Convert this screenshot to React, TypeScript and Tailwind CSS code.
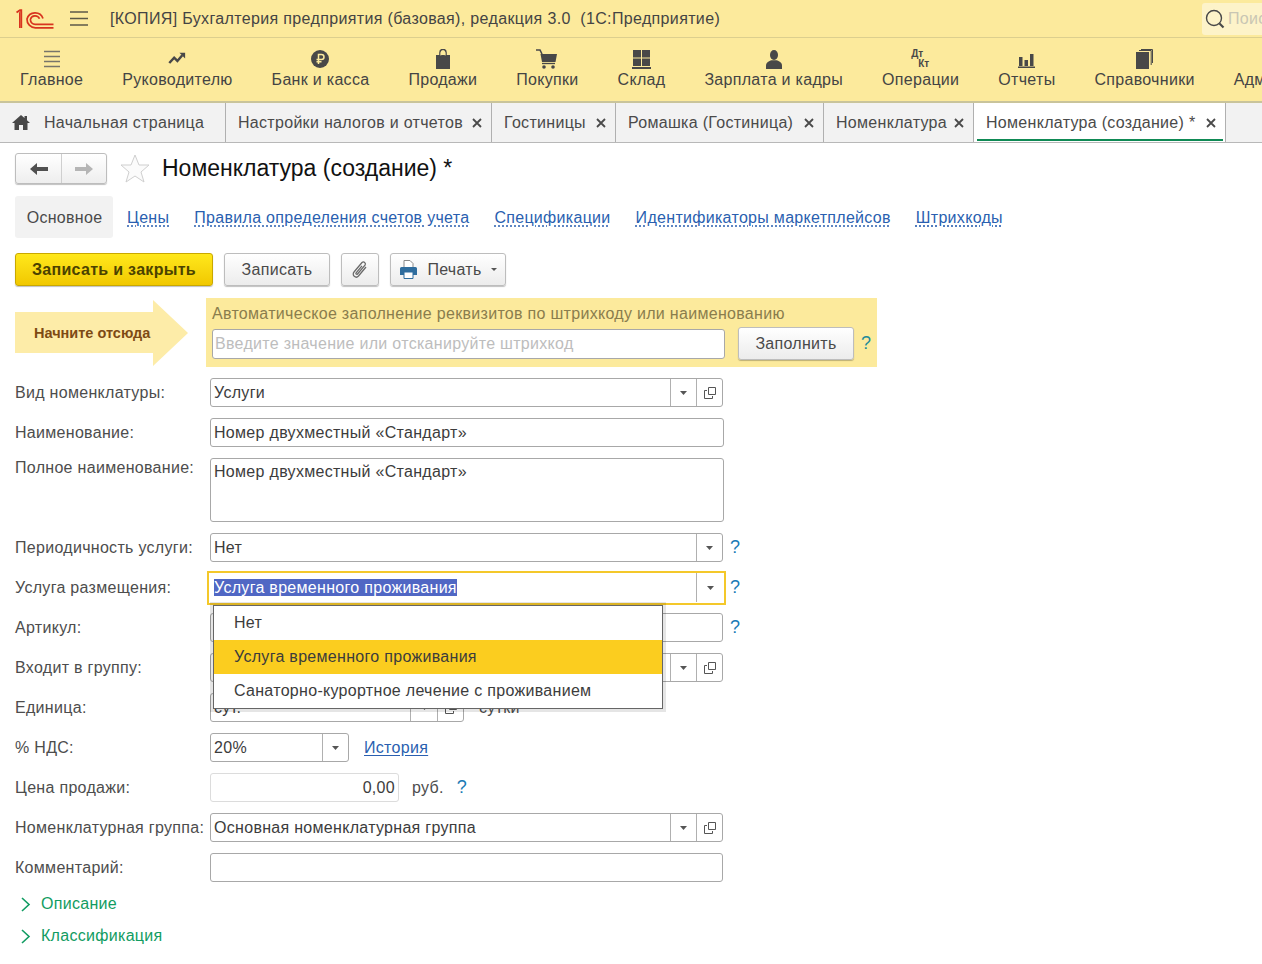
import React from 'react';

const navItems: { label: string; icon: React.ReactNode }[] = [
  { label: 'Главное', icon: <MenuIcon /> },
  { label: 'Руководителю', icon: <TrendIcon /> },
  { label: 'Банк и касса', icon: <RubleIcon /> },
  { label: 'Продажи', icon: <BagIcon /> },
  { label: 'Покупки', icon: <CartIcon /> },
  { label: 'Склад', icon: <StockIcon /> },
  { label: 'Зарплата и кадры', icon: <PersonIcon /> },
  { label: 'Операции', icon: <DebitIcon /> },
  { label: 'Отчеты', icon: <BarsIcon /> },
  { label: 'Справочники', icon: <BooksIcon /> },
  { label: 'Администрирование', icon: <span /> },
];

const tabs = [
  { label: 'Настройки налогов и отчетов', w: 'w-[266px]' },
  { label: 'Гостиницы', w: 'w-[124px]' },
  { label: 'Ромашка (Гостиница)', w: 'w-[208px]' },
  { label: 'Номенклатура', w: 'w-[150px]' },
];

const links = ['Цены', 'Правила определения счетов учета', 'Спецификации', 'Идентификаторы маркетплейсов', 'Штрихкоды'];

function MenuIcon() {
  return (
    <svg className="mb-[1px]" width="20" height="18" viewBox="0 0 20 18" fill="none" stroke="#77756a" strokeWidth="1.5">
      <path d="M2 1.5h16M2 6.5h16M2 11.5h16M2 16.5h16" />
    </svg>
  );
}

function TrendIcon() {
  return (
    <svg className="mb-[4px]" width="18" height="13" viewBox="0 0 22 16" fill="none">
      <path d="M1.5 13.5 7.5 7l4 4 6-7" stroke="#484848" strokeWidth="3" />
      <path d="M14 1h7v7z" fill="#484848" />
    </svg>
  );
}

function RubleIcon() {
  return (
    <svg className="mb-[1px]" width="18" height="18" viewBox="0 0 18 18" fill="none">
      <circle cx="9" cy="9" r="9" fill="#484848" />
      <path d="M7.5 14V4.5h3a2.4 2.4 0 0 1 0 5H5.5M5.5 11.8h5" stroke="#fcea9c" strokeWidth="1.5" />
    </svg>
  );
}

function BagIcon() {
  return (
    <svg width="16" height="20" viewBox="0 0 16 20" fill="none">
      <path d="M1 6h14v14H1z" fill="#484848" />
      <path d="M5 9V3.5a3 3 0 0 1 6 0V9" stroke="#484848" strokeWidth="1.6" />
      <path d="M5.8 6.5V4a2.2 2.2 0 0 1 4.4 0v2.5" stroke="#fcea9c" strokeWidth="0.8" />
    </svg>
  );
}

function CartIcon() {
  return (
    <svg width="22" height="20" viewBox="0 0 22 20" fill="none">
      <path d="M0 1h4l2 4" stroke="#484848" strokeWidth="1.6" />
      <path d="M4.5 5H21l-1.5 8H6z" fill="#484848" />
      <path d="M6 14.5h13" stroke="#484848" strokeWidth="1.3" />
      <circle cx="8" cy="18" r="1.8" fill="#484848" />
      <circle cx="17" cy="18" r="1.8" fill="#484848" />
    </svg>
  );
}

function StockIcon() {
  return (
    <svg width="19" height="19" viewBox="0 0 19 19" fill="#484848">
      <path d="M1 0h8v7.5H1zM10 0h8v7.5h-8zM1 8.5h8V16H1zM10 8.5h8V16h-8zM0 17h19v2H0z" />
    </svg>
  );
}

function PersonIcon() {
  return (
    <svg width="16" height="19" viewBox="0 0 16 19" fill="#484848">
      <ellipse cx="8" cy="5" rx="4" ry="5" />
      <path d="M0 19v-3.5C0 12.5 3 11 5.5 10.2h5c2.5.8 5.5 2.3 5.500 5.300V19z" />
    </svg>
  );
}

function DebitIcon() {
  return (
    <div className="flex h-[20px] w-[19px] flex-col text-[10px] font-bold leading-[10px] tracking-normal text-[#484848]">
      <span>Дт</span>
      <span className="ml-[7px]">Кт</span>
    </div>
  );
}

function BarsIcon() {
  return (
    <svg className="mb-[1px]" width="17" height="15" viewBox="0 0 17 15" fill="#484848">
      <path d="M1 4h3.5v9H1zM6.5 7H10v6H6.5zM12 1h3.5v12H12zM0 13.6h17V15H0z" />
    </svg>
  );
}

function BooksIcon() {
  return (
    <svg width="17" height="20" viewBox="0 0 17 20" fill="none">
      <path d="M0 3h13v17H0z" fill="#484848" />
      <path d="M3 1.5h12.2V16M5 .5h11.5V14" stroke="#484848" strokeWidth="1" />
    </svg>
  );
}

function Logo() {
  return (
    <svg width="38" height="20" viewBox="0 0 38 20" fill="none" stroke="#d8341f" strokeWidth="1.7">
      <path d="M0.5 3.5 4 1.2h1.2V19" strokeWidth="2" />
      <path d="M3.5 3.2V19" strokeWidth="1" />
      <path d="M27 9.5A8.4 8.4 0 0 0 11 10a8.4 8.4 0 0 0 8.4 8.8H37.5" />
      <path d="M23.5 9.8A4.8 4.8 0 0 0 14.4 10.4a4.8 4.8 0 0 0 5 5H37.5" />
    </svg>
  );
}

function HomeIcon() {
  return (
    <svg width="18" height="15" viewBox="0 0 18 15" fill="#484848">
      <path d="M9 0 0 8h2.5v7h4.5v-5h4v5h4.500V8H18l-3-2.700V1h-2.500v2.100z" />
    </svg>
  );
}

function CloseIcon() {
  return (
    <svg width="10" height="10" viewBox="0 0 10 10" fill="none" stroke="#4a4a4a" strokeWidth="1.8">
      <path d="m1 1 8 8M9 1 1 9" />
    </svg>
  );
}

function Caret() {
  return (
    <svg width="7" height="4" viewBox="0 0 7 4" fill="#555555">
      <path d="M0 0h7L3.500 4z" />
    </svg>
  );
}

function OpenIcon() {
  return (
    <svg width="12" height="12" viewBox="0 0 12 12" fill="none" stroke="#555555" strokeWidth="1">
      <path d="M4.500.5h7v7h-7z" />
      <path d="M3 3.500H.5v8h8V9" />
    </svg>
  );
}

function Chevron() {
  return (
    <svg width="11" height="15" viewBox="0 0 11 15" fill="none" stroke="#119c62" strokeWidth="1.6">
      <path d="m2 1 7 6.500-7 6.500" />
    </svg>
  );
}

function Help({ className = 'text-[#1a7ab5]' }: { className?: string }) {
  return <span className={`pb-[2px] text-[18px] leading-none ${className}`}>?</span>;
}

function Label({ text }: { text: string }) {
  return <span className="w-[195px] shrink-0 whitespace-nowrap text-[#4d4d4d]">{text}</span>;
}

function Cell({ w = 'w-[26px]', children }: { w?: string; children: React.ReactNode }) {
  return <span className={`flex h-full ${w} shrink-0 items-center justify-center border-l border-[#b0b0b0]`}>{children}</span>;
}

function Field({
  w = 'w-[513px]',
  text,
  caret,
  open,
}: {
  w?: string;
  text?: string;
  caret?: boolean;
  open?: boolean;
}) {
  return (
    <div className={`flex h-[29px] ${w} shrink-0 items-center rounded-[3px] border border-[#a8a8a8] bg-white`}>
      <span className="flex-1 truncate pl-[3px] text-[#3c3c3c]">{text}</span>
      {caret && (
        <Cell>
          <Caret />
        </Cell>
      )}
      {open && (
        <Cell>
          <OpenIcon />
        </Cell>
      )}
    </div>
  );
}

function Row({ label, children }: { label: string; children: React.ReactNode }) {
  return (
    <div className="flex h-[29px] items-center">
      <Label text={label} />
      {children}
    </div>
  );
}

function Button({ w, children }: { w: string; children: React.ReactNode }) {
  return (
    <button className={`flex h-[33px] ${w} items-center justify-center rounded-[3px] border border-[#bdbdbd] bg-gradient-to-b from-white to-[#ececec] text-[#4a4a4a] shadow-[0_1px_1px_rgba(0,0,0,0.25)]`}>
      {children}
    </button>
  );
}

export default function App() {
  return (
    <div className="h-[964px] w-[1262px] overflow-hidden bg-white font-[Liberation_Sans] text-[16px] tracking-[0.3px] text-[#4a4a4a]">
      <header className="flex h-[38px] items-center border-b border-[#dccf8e] bg-[#fcea9c] pl-[16px]">
        <Logo />
        <svg className="ml-[16px]" width="18" height="15" viewBox="0 0 18 15" fill="none" stroke="#5c5a48" strokeWidth="1.3">
          <path d="M0 1h18M0 7.500h18M0 14h18" />
        </svg>
        <span className="ml-[22px] whitespace-pre tracking-[0.35px] text-[#444444]">[КОПИЯ] Бухгалтерия предприятия (базовая), редакция 3.0  (1С:Предприятие)</span>
        <div className="ml-auto flex h-[32px] w-[60px] items-center gap-[3px] overflow-hidden rounded-l-[3px] bg-[#fdf3c9] pl-[3px]">
          <svg className="shrink-0" width="20" height="20" viewBox="0 0 20 20" fill="none" stroke="#484848" strokeWidth="1.4">
            <circle cx="9" cy="9" r="7.500" />
            <path d="m14.500 14.500 4 4" strokeWidth="2.200" />
          </svg>
          <span className="text-[#c9c6b4]">Поиск</span>
        </div>
      </header>

      <nav className="flex h-[65px] gap-[39px] overflow-hidden border-b-2 border-[#c9c49b] bg-[#fcea9c] pl-[20px]">
        {navItems.map((item) => (
          <div key={item.label} className="flex shrink-0 flex-col items-center">
            <div className="flex h-[32px] items-end pb-[1px]">{item.icon}</div>
            <span className="mt-[1px] whitespace-nowrap leading-[18px] text-[#444444]">{item.label}</span>
          </div>
        ))}
      </nav>

      <div className="flex h-[40px] border-b border-[#b8b8b8] bg-[#f2f2f2]">
        <div className="flex w-[226px] items-center gap-[14px] border-r border-[#b0b0b0] pl-[12px]">
          <HomeIcon />
          <span>Начальная страница</span>
        </div>
        {tabs.map((tab) => (
          <div key={tab.label} className={`flex ${tab.w} items-center justify-between border-r border-[#b0b0b0] pl-[12px] pr-[9px]`}>
            <span className="whitespace-nowrap">{tab.label}</span>
            <CloseIcon />
          </div>
        ))}
        <div className="relative flex w-[252px] items-center justify-between border-r border-[#b0b0b0] bg-white pl-[12px] pr-[9px]">
          <span className="whitespace-nowrap">Номенклатура (создание) *</span>
          <CloseIcon />
          <span className="absolute bottom-[1px] left-[3px] right-[2px] h-[2px] bg-[#0f8a55]" />
        </div>
      </div>

      <main className="px-[15px]">
        <div className="mt-[10px] flex h-[31px] items-center">
          <div className="flex h-full w-[92px] rounded-[3px] border border-[#bdbdbd] bg-gradient-to-b from-white to-[#eeeeee] shadow-[0_1px_1px_rgba(0,0,0,0.25)]">
            <span className="flex w-[46px] items-center justify-center border-r border-[#cfcfcf]">
              <svg width="18" height="12" viewBox="0 0 18 12" fill="#505050">
                <path d="M0 6 7 0v4h11v4H7v4z" />
              </svg>
            </span>
            <span className="flex flex-1 items-center justify-center">
              <svg width="18" height="12" viewBox="0 0 18 12" fill="#b5b5b5">
                <path d="M18 6 11 0v4H0v4h11v4z" />
              </svg>
            </span>
          </div>
          <svg className="ml-[13px]" width="30" height="29" viewBox="0 0 30 29" fill="#fbfbfb" stroke="#cfcfcf" strokeWidth="1">
            <path d="m15 1 4 10h10l-8 7 3 10-9-6-9 6 3-10-8-7h10z" />
          </svg>
          <h1 className="ml-[12px] whitespace-nowrap pb-[1px] text-[23px] leading-none tracking-normal text-[#111111]">Номенклатура (создание) *</h1>
        </div>

        <div className="mt-[12px] flex h-[42px] items-center">
          <span className="flex h-full w-[98px] items-center justify-center rounded-[3px] bg-[#f2f2f2] pl-[1px] pt-[1px]">Основное</span>
          <div className="ml-[14px] flex gap-[25px] pt-[1px]">
            {links.map((link) => (
              <a key={link} className="whitespace-nowrap text-[#2a5fb0] underline decoration-dotted underline-offset-[3px]">
                {link}
              </a>
            ))}
          </div>
        </div>

        <div className="mt-[15px] flex items-center gap-[11px]">
          <button className="flex h-[33px] w-[198px] items-center justify-center rounded-[3px] border border-[#c9a800] bg-gradient-to-b from-[#ffe81a] to-[#f1c800] font-bold text-[#4b4200] shadow-[0_1px_1px_rgba(0,0,0,0.25)]">
            Записать и закрыть
          </button>
          <Button w="w-[106px]">Записать</Button>
          <Button w="w-[38px]">
            <svg width="18" height="20" viewBox="0 0 18 20" fill="none" stroke="#6a6a6a" strokeWidth="1.300">
              <path d="M15 7 7.500 16a3 3 0 0 1-4.500-4l8-9.500a2 2 0 0 1 3 2.600L6.500 14a.9.9 0 0 1-1.400-1.200L11 5.800" />
            </svg>
          </Button>
          <Button w="w-[116px]">
            <svg width="19" height="19" viewBox="0 0 19 19">
              <path d="M5 .5h6l3 3V8H5z" fill="#fff" stroke="#8a8a8a" />
              <path d="M1 8.500a1.500 1.500 0 0 1 1.500-1.500h14A1.500 1.500 0 0 1 18 8.500V15H1z" fill="#2f6d9e" />
              <path d="M5 12h9v6.500H5z" fill="#fff" stroke="#2f6d9e" />
            </svg>
            <span className="ml-[9px]">Печать</span>
            <svg className="ml-[9px]" width="6" height="3" viewBox="0 0 6 3" fill="#555555">
              <path d="M0 0h6L3 3z" />
            </svg>
          </Button>
        </div>

        <div className="mt-[12px] flex h-[69px]">
          <div className="relative h-full w-[191px] shrink-0">
            <svg className="absolute left-0 top-[2px]" width="173" height="66" viewBox="0 0 173 66" fill="#fdeca8">
              <path d="M0 12h138V0l35 33-35 33V53H0z" />
            </svg>
            <span className="absolute left-[19px] top-[25px] whitespace-nowrap text-[14.5px] font-bold tracking-normal text-[#7d4a14]">Начните отсюда</span>
          </div>
          <div className="flex h-full w-[671px] flex-col bg-[#fcea9c] pl-[6px]">
            <span className="mt-[7px] leading-[18px] text-[#8a7d4d]">Автоматическое заполнение реквизитов по штрихкоду или наименованию</span>
            <div className="mt-[4px] flex items-center">
              <div className="flex h-[30px] w-[513px] items-center rounded-[3px] border border-[#a8a8a8] bg-white pl-[2px] pt-[1px] text-[#bdbdbd]">
                Введите значение или отсканируйте штрихкод
              </div>
              <div className="ml-[13px]">
                <Button w="w-[116px]">Заполнить</Button>
              </div>
              <Help className="ml-[7px] text-[#1f8a9a]" />
            </div>
          </div>
        </div>

        <section className="relative mt-[11px] flex flex-col gap-[11px]">
          <Row label="Вид номенклатуры:">
            <Field text="Услуги" caret open />
          </Row>
          <Row label="Наименование:">
            <Field w="w-[514px]" text="Номер двухместный «Стандарт»" />
          </Row>
          <div className="flex h-[64px]">
            <span className="-mt-[2px] w-[195px] shrink-0 text-[#4d4d4d]">Полное наименование:</span>
            <div className="h-full w-[514px] rounded-[3px] border border-[#a8a8a8] bg-white pl-[3px] pt-[1px] text-[#3c3c3c]">Номер двухместный «Стандарт»</div>
          </div>
          <Row label="Периодичность услуги:">
            <Field text="Нет" caret />
            <Help className="ml-[7px] text-[#1a7ab5]" />
          </Row>
          <Row label="Услуга размещения:">
            <div className="-ml-[3px] flex h-[34px] w-[519px] shrink-0 items-center border-2 border-[#f4c82a] bg-white pl-[5px]">
              <span className="flex-1">
                <span className="bg-[#5067c4] text-white">Услуга временного проживания</span>
              </span>
              <span className="flex h-[29px] w-[28px] shrink-0 items-center justify-center border-l border-[#b0b0b0]">
                <Caret />
              </span>
            </div>
            <Help className="ml-[4px] text-[#1a7ab5]" />
          </Row>
          <Row label="Артикул:">
            <Field />
            <Help className="ml-[7px] text-[#1a7ab5]" />
          </Row>
          <Row label="Входит в группу:">
            <Field caret open />
          </Row>
          <Row label="Единица:">
            <div className="flex h-[29px] w-[254px] shrink-0 items-center rounded-[3px] border border-[#a8a8a8] bg-white">
              <span className="flex-1 pl-[3px] text-[#3c3c3c]">сут.</span>
              <Cell w="w-[27px]">
                <Caret />
              </Cell>
              <Cell>
                <OpenIcon />
              </Cell>
            </div>
            <span className="ml-[15px] text-[#4d4d4d]">сутки</span>
          </Row>
          <Row label="% НДС:">
            <Field w="w-[139px]" text="20%" caret />
            <a className="ml-[15px] text-[#2a5fb0] underline underline-offset-[2px]">История</a>
          </Row>
          <Row label="Цена продажи:">
            <div className="flex h-[29px] w-[189px] shrink-0 items-center justify-end rounded-[3px] border border-[#dcdcdc] pr-[3px] text-[#3c3c3c]">0,00</div>
            <span className="ml-[13px] text-[#4d4d4d]">руб.</span>
            <Help className="ml-[13px] text-[#1a7ab5]" />
          </Row>
          <Row label="Номенклатурная группа:">
            <Field text="Основная номенклатурная группа" caret open />
          </Row>
          <Row label="Комментарий:">
            <Field />
          </Row>

          <div className="absolute left-[198px] top-[227px] w-[450px] border border-[#666666] bg-white text-[#3c3c3c] shadow-[0_0_0_3px_rgba(0,0,0,0.1)]">
            <div className="flex h-[34px] items-center pl-[20px]">Нет</div>
            <div className="flex h-[34px] items-center bg-[#fbcd1f] pl-[20px]">Услуга временного проживания</div>
            <div className="flex h-[34px] items-center pl-[20px]">Санаторно-курортное лечение с проживанием</div>
          </div>
        </section>

        <div className="mt-[12px] flex flex-col gap-[12px] text-[#119c62]">
          <div className="flex h-[20px] items-center gap-[10px] pl-[5px]">
            <Chevron />
            <span>Описание</span>
          </div>
          <div className="flex h-[20px] items-center gap-[10px] pl-[5px]">
            <Chevron />
            <span>Классификация</span>
          </div>
        </div>
      </main>
    </div>
  );
}
